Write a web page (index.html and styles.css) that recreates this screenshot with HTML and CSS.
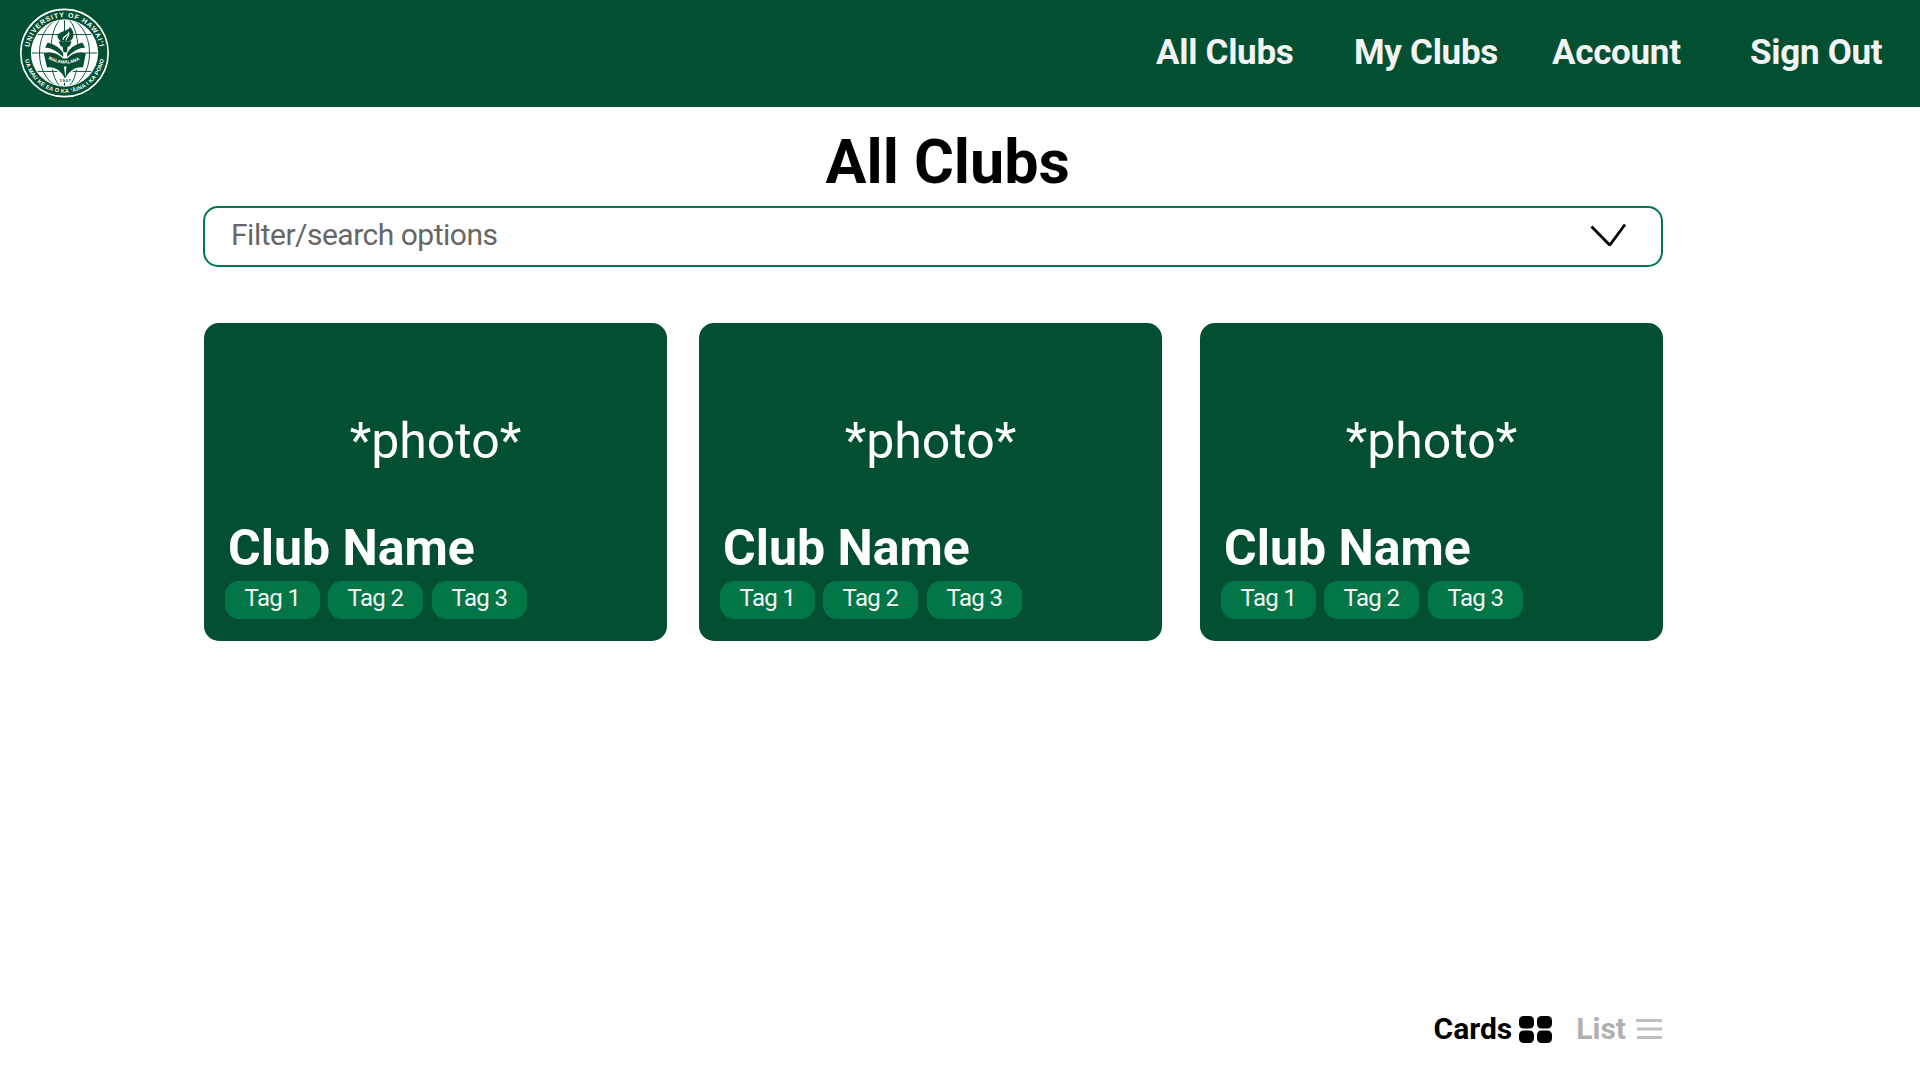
FILE: index.html
```html
<!DOCTYPE html>
<html lang="en">
<head>
<meta charset="utf-8">
<title>All Clubs</title>
<link rel="stylesheet" href="styles.css">
</head>
<body>
<header class="site-header">
  <svg class="seal" viewBox="56 22 276 276" role="img" aria-label="University of Hawaiʻi seal">
    <defs>
      <path id="arc-top" d="M89.2 186 A108 108 0 1 1 298.8 186"/>
      <path id="arc-bottom" d="M73 160 A121 121 0 0 0 315 160"/>
      <path id="arc-book" d="M145 178 Q195 206 247 178"/>
      <clipPath id="globe"><circle cx="194" cy="160" r="99"/></clipPath>
    </defs>
    <circle cx="194" cy="160" r="132.5" fill="none" stroke="#fff" stroke-width="5"/>
    <circle cx="194" cy="160" r="102" fill="#fff"/>
    <g clip-path="url(#globe)" fill="none" stroke="#0a5a3a" stroke-width="3">
      <path d="M90 104H298M90 160H298M90 216H298M194 58V262"/>
      <ellipse cx="194" cy="160" rx="76" ry="106"/>
      <ellipse cx="194" cy="160" rx="42" ry="106"/>
    </g>
    <path d="M135 132 Q174 136 193 163 Q215 136 256 132 L249 204 Q216 202 196 237 Q176 202 141 204Z" fill="#fff" stroke="#fff" stroke-width="8"/>
    <path d="M143 128 Q177 137 190 161 L190 172 Q163 145 135 143Z M248 128 Q214 137 202 161 L202 172 Q228 145 257 143Z" fill="#025031"/>
    <path d="M131 160 Q162 151 190 177 L202 177 Q228 151 259 160 L250 204 Q216 199 196 238 Q176 199 141 204Z" fill="#025031"/>
    <path d="M176 125H216L209 140H183ZM188 140H204L201 158H191Z" fill="#025031"/>
    <path d="M183 125C162 107 178 98 197 92C207 88 211 85 209 80C227 96 224 118 209 125Z" fill="#025031"/>
    <path d="M190 120C187 110 202 109 207 99C210 110 198 113 199 122" fill="none" stroke="#fff" stroke-width="3.5"/>
    <path d="M192 201H200L197 234Z" fill="#fff"/>
    <text class="seal-text seal-book"><textPath href="#arc-book" textLength="100">MALAMALAMA</textPath></text>
    <rect x="177" y="236" width="38" height="14" fill="#fff"/>
    <text class="seal-text seal-year" x="179" y="248" textLength="34">1907</text>
    <text class="seal-text seal-top"><textPath href="#arc-top" startOffset="44" textLength="302">UNIVERSITY OF HAWAIʻI</textPath></text>
    <text class="seal-text seal-bottom"><textPath href="#arc-bottom" startOffset="20" textLength="340">UA MAU KE EA O KA ʻĀINA I KA PONO</textPath></text>
    <text class="seal-mark" x="270" y="290">™</text>
  </svg>
  <nav class="nav">
    <a>All Clubs</a>
    <a>My Clubs</a>
    <a>Account</a>
    <a>Sign Out</a>
  </nav>
</header>
<main class="page">
  <h1 class="title">All Clubs</h1>
  <div class="filter">
    <span>Filter/search options</span>
    <svg class="chevron" width="38" height="24" viewBox="0 0 38 24"><path d="M1.5 3.5 L19.2 21.5 H20.2 L35 1.5" fill="none" stroke="#000" stroke-width="2.8"/></svg>
  </div>
  <section class="cards">
    <article class="card">
      <div class="photo">*photo*</div>
      <h2 class="name">Club Name</h2>
      <div class="tags"><span class="tag">Tag 1</span><span class="tag">Tag 2</span><span class="tag">Tag 3</span></div>
    </article>
    <article class="card">
      <div class="photo">*photo*</div>
      <h2 class="name">Club Name</h2>
      <div class="tags"><span class="tag">Tag 1</span><span class="tag">Tag 2</span><span class="tag">Tag 3</span></div>
    </article>
    <article class="card">
      <div class="photo">*photo*</div>
      <h2 class="name">Club Name</h2>
      <div class="tags"><span class="tag">Tag 1</span><span class="tag">Tag 2</span><span class="tag">Tag 3</span></div>
    </article>
  </section>
  <footer class="views">
    <div class="view view-cards">Cards
      <svg width="33" height="27" viewBox="0 0 33 27"><rect width="15" height="12.6" rx="4.5"/><rect x="18" width="15" height="12.6" rx="4.5"/><rect y="14.4" width="15" height="12.6" rx="4.5"/><rect x="18" y="14.4" width="15" height="12.6" rx="4.5"/></svg>
    </div>
    <div class="view view-list">List
      <svg width="26" height="20" viewBox="0 0 26 20"><path d="M0 1.5H26M1 10H26M1 18.5H26" stroke="#bfbfbf" stroke-width="2.8"/></svg>
    </div>
  </footer>
</main>
</body>
</html>
```
FILE: styles.css
```css
* { box-sizing: border-box; }

body {
  margin: 0;
  height: 1080px;
  display: flex;
  flex-direction: column;
  background: #fff;
  color: #000;
  font-family: Roboto, sans-serif;
  overflow: hidden;
}

.site-header {
  height: 107px;
  flex: none;
  display: flex;
  justify-content: space-between;
  background: #025031;
  padding: 7px 36px 0 19px;
}

.seal { width: 91px; height: 92px; margin-right: 1px; }
.seal-text { font-family: "Liberation Sans", sans-serif; font-weight: 700; fill: #fff; }
.seal-top { font-size: 21px; }
.seal-bottom { font-size: 17px; }
.seal-book { font-size: 14px; }
.seal-year { font-size: 13px; fill: #025031; }
.seal-mark { font-family: "Liberation Sans", sans-serif; font-size: 12px; fill: #3d7a5e; }

.nav {
  display: grid;
  grid-template-columns: 198px 198px 198px 134px;
  padding-top: 25px;
  color: #f3f3f3;
  font-size: 35px;
  font-weight: 700;
  letter-spacing: -0.3px;
  line-height: 41px;
  white-space: nowrap;
}

.page { flex: 1; display: flex; flex-direction: column; padding: 20px 257px 0 203px; }

.title {
  margin: 0 0 9px 622.5px;
  font-size: 61px;
  font-weight: 700;
  line-height: 70px;
}

.filter {
  height: 61px;
  display: flex;
  align-items: center;
  justify-content: space-between;
  border: 2px solid #00774a;
  border-radius: 15px;
  padding: 0 33px 4px 26px;
  color: #666;
  font-size: 30px;
  letter-spacing: -0.5px;
}

.cards {
  display: grid;
  grid-template-columns: 495px 501px 463px;
  margin: 56px 0 0 1px;
}

.card {
  width: 463px;
  height: 318px;
  border-radius: 15px;
  background: #025031;
  color: #fff;
  padding: 88px 0 0 21px;
}

.photo { margin-left: -21px; font-size: 50px; line-height: 60px; text-align: center; }
.name { margin: 47px 0 2px 3px; font-size: 50px; font-weight: 700; line-height: 61px; }

.tags { display: grid; grid-template-columns: 103px 104px 95px; }
.tag {
  width: 95px;
  height: 38px;
  border-radius: 14px;
  background: #037648;
  color: #f3f3f3;
  font-size: 24px;
  letter-spacing: -0.6px;
  line-height: 34px;
  text-align: center;
}

.views { display: flex; justify-content: flex-end; gap: 24px; margin: auto 0 33px; font-size: 30px; font-weight: 700; line-height: 36px; }
.view { display: flex; align-items: center; gap: 7px; }
.view-list { color: #b0b0b0; gap: 10px; padding-right: 1px; }
```
